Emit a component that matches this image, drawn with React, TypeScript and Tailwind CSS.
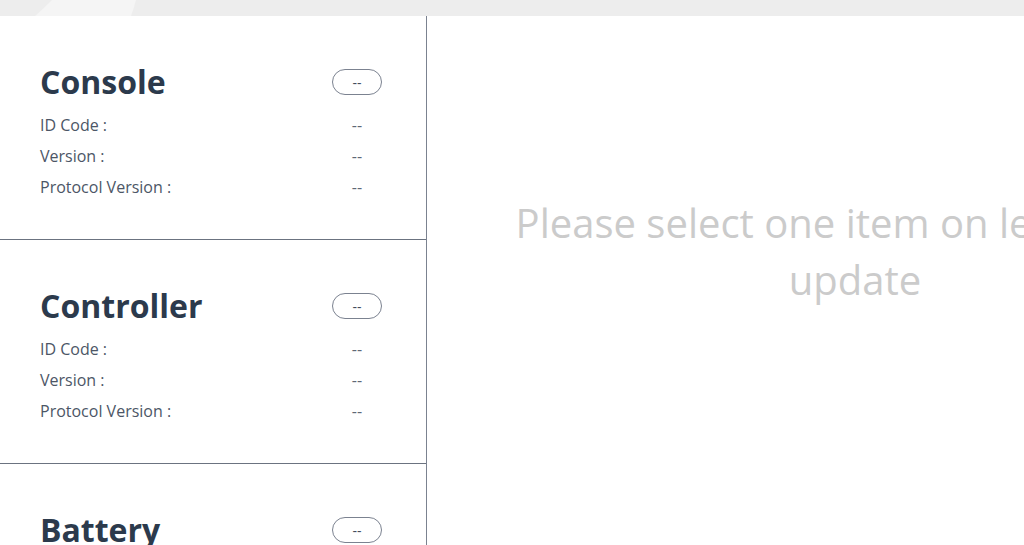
import React from 'react';

// Firmware update — device list on the left, detail pane on the right.

interface Device {
	name: string;
	status: string;
	fields: { label: string; value: string }[];
}

const DEVICES: Device[] = [
	{
		name: 'Console',
		status: '--',
		fields: [
			{ label: 'ID Code :', value: '--' },
			{ label: 'Version :', value: '--' },
			{ label: 'Protocol Version :', value: '--' },
		],
	},
	{
		name: 'Controller',
		status: '--',
		fields: [
			{ label: 'ID Code :', value: '--' },
			{ label: 'Version :', value: '--' },
			{ label: 'Protocol Version :', value: '--' },
		],
	},
	{
		name: 'Battery',
		status: '--',
		fields: [
			{ label: 'ID Code :', value: '--' },
			{ label: 'Version :', value: '--' },
			{ label: 'Protocol Version :', value: '--' },
		],
	},
];

function DeviceCard({ device }: { device: Device }): React.ReactElement {
	return (
		<div className="h-[224px] shrink-0 border-b border-[#6b7380] pl-10 pr-[44px] pt-[46px]">
			<div className="flex items-center justify-between">
				<h2 className="text-[32px] leading-[40px] font-bold text-[#2c3a4c]">{device.name}</h2>
				<span className="flex h-[26px] w-[50px] items-center justify-center rounded-full border border-[#7b8290] text-[14px] text-[#444d5c]">
					{device.status}
				</span>
			</div>
			<div className="mt-[7px]">
				{device.fields.map((f) => (
					<div key={f.label} className="flex h-[31px] items-center justify-between text-[16px] text-[#4c5666]">
						<span>{f.label}</span>
						<span className="w-[50px] text-center text-[#5f6876]">{f.value}</span>
					</div>
				))}
			</div>
		</div>
	);
}

export default function App(): React.ReactElement {
	return (
		<div
			className="h-[545px] w-[1024px] overflow-hidden bg-white"
			style={{ fontFamily: '"Open Sans", "Noto Sans", sans-serif' }}
		>
			{/* top strip */}
			<div className="relative h-4 w-[1283px] overflow-hidden bg-[#ededed]">
				<svg className="absolute left-0 top-0" width="200" height="16" viewBox="0 0 200 16">
					<path d="M52 0 Q44 8 35 16 L131 16 Q134 8 136 0 Z" fill="#f5f5f5" />
				</svg>
			</div>
			<div className="flex h-[529px] w-[1283px]">
				<div className="flex w-[427px] shrink-0 flex-col border-r border-[#7b8290]">
					{DEVICES.map((d) => (
						<DeviceCard key={d.name} device={d} />
					))}
				</div>
				<div className="flex w-[856px] shrink-0 flex-col items-center pt-[178px] text-[40px] font-normal leading-[57px] text-[#cbcbcb]">
					<span className="whitespace-nowrap">Please select one item on left side to</span>
					<span className="whitespace-nowrap">update</span>
				</div>
			</div>
		</div>
	);
}
